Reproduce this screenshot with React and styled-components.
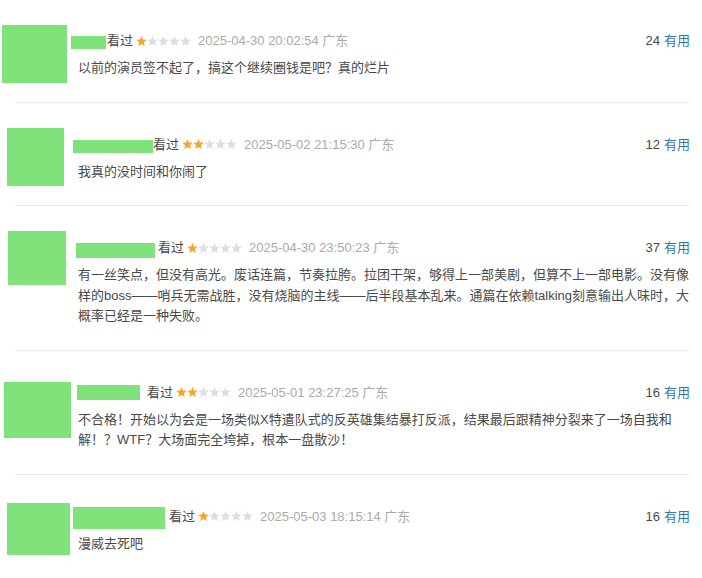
import React from 'react';
import styled, {createGlobalStyle} from "styled-components";

const GlobalStyle = createGlobalStyle`
  body {
    margin: 0;
    background: #fff;
    font-family: "Liberation Sans", Arial, "Noto Sans CJK SC", sans-serif;
    font-size: 13px;
    color: #494949;
  }
`

const List = styled.div`
  width: 702px;
  padding-right: 12px;
  box-sizing: border-box;
`

const Item = styled.div`
  display: flex;
  align-items: flex-start;
  padding: 32px 0 23px;

  &:first-child {
    padding-top: 31px;
  }
`

const Divider = styled.div`
  height: 1px;
  margin-left: 15px;
  background: #ececec;
`

const AvatarCol = styled.div`
  flex: 0 0 78px;
  height: 0;
`

// green blocks hide the avatar / user name in the screenshot
const Avatar = styled.div`
  width: ${p => p.$w}px;
  height: ${p => p.$h}px;
  margin-left: ${p => p.$x}px;
  margin-top: ${p => p.$top}px;
  background: #80e27b;
`

const Content = styled.div`
  flex: 1;
  min-width: 0;
`

const Header = styled.div`
  display: flex;
  align-items: center;
  height: 20px;
  line-height: 20px;
  white-space: nowrap;
`

const NameBlock = styled.span`
  flex: 0 0 ${p => p.$w}px;
  height: ${p => p.$h}px;
  margin-left: ${p => p.$ml}px;
  margin-right: ${p => p.$mr}px;
  margin-top: ${p => p.$dy * 2}px;
  background: #80e27b;
`

const Watched = styled.span`
  color: #494949;
`

const StarsBox = styled.svg`
  display: block;
  width: 55px;
  height: 11px;
  margin: 0 7px 0 3px;
`

const Time = styled.span`
  color: #aaa;
`

const Votes = styled.span`
  margin-left: auto;
  color: #494949;
`

const Useful = styled.span`
  color: #37a;
  margin-left: 4px;
`

const Text = styled.p`
  margin: 7px 0 0;
  line-height: 20.5px;
  color: #494949;
  word-break: break-all;
`

const STAR = "5.5,0 7,3.45 10.83,3.77 7.9,6.3 8.79,10.03 5.5,8.1 2.21,10.03 3.1,6.3 0.17,3.77 4,3.45"

function Stars({value}) {
    return (
        <StarsBox viewBox="0 0 55 11">
            {[0, 1, 2, 3, 4].map(i => (
                <polygon key={i} points={STAR} transform={`translate(${i * 11} 0)`}
                         fill={i < value ? "#fba52c" : "#dedede"}/>
            ))}
        </StarsBox>
    )
}

const comments = [
    {
        avatar: {x: 2, top: -6, w: 65, h: 58},
        name: {ml: -7, w: 35, h: 13, dy: 1.5, mr: 1},
        rating: 1, time: "2025-04-30 20:02:54", votes: 24,
        text: "以前的演员签不起了，搞这个继续圈钱是吧？真的烂片"
    },
    {
        avatar: {x: 7, top: -7, w: 57, h: 58},
        name: {ml: -5, w: 80, h: 13, dy: 1.5, mr: 0},
        rating: 2, time: "2025-05-02 21:15:30", votes: 12,
        text: "我真的没时间和你闹了"
    },
    {
        avatar: {x: 8, top: -7, w: 58, h: 54},
        name: {ml: -2, w: 79, h: 15, dy: 2, mr: 3},
        rating: 1, time: "2025-04-30 23:50:23", votes: 37,
        text: "有一丝笑点，但没有高光。废话连篇，节奏拉胯。拉团干架，够得上一部美剧，但算不上一部电影。没有像样的boss——哨兵无需战胜，没有烧脑的主线——后半段基本乱来。通篇在依赖talking刻意输出人味时，大概率已经是一种失败。"
    },
    {
        avatar: {x: 4, top: -1, w: 67, h: 56},
        name: {ml: -1, w: 63, h: 15, dy: -0.5, mr: 7},
        rating: 2, time: "2025-05-01 23:27:25", votes: 16,
        text: "不合格！开始以为会是一场类似X特遣队式的反英雄集结暴打反派，结果最后跟精神分裂来了一场自我和解！？WTF？大场面完全垮掉，根本一盘散沙！"
    },
    {
        avatar: {x: 7, top: -4, w: 63, h: 52},
        name: {ml: -5, w: 92, h: 22, dy: 1, mr: 4},
        rating: 1, time: "2025-05-03 18:15:14", votes: 16,
        text: "漫威去死吧"
    },
]

function App() {
    return (
        <>
            <GlobalStyle/>
            <List>
                {comments.map((c, i) => (
                    <React.Fragment key={i}>
                        {i > 0 && <Divider/>}
                        <Item>
                            <AvatarCol>
                                <Avatar $x={c.avatar.x} $top={c.avatar.top} $w={c.avatar.w} $h={c.avatar.h}/>
                            </AvatarCol>
                            <Content>
                                <Header>
                                    <NameBlock $ml={c.name.ml} $w={c.name.w} $h={c.name.h}
                                               $dy={c.name.dy} $mr={c.name.mr}/>
                                    <Watched>看过</Watched>
                                    <Stars value={c.rating}/>
                                    <Time>{c.time} 广东</Time>
                                    <Votes>{c.votes}<Useful>有用</Useful></Votes>
                                </Header>
                                <Text>{c.text}</Text>
                            </Content>
                        </Item>
                    </React.Fragment>
                ))}
            </List>
        </>
    );
}

export default App;
